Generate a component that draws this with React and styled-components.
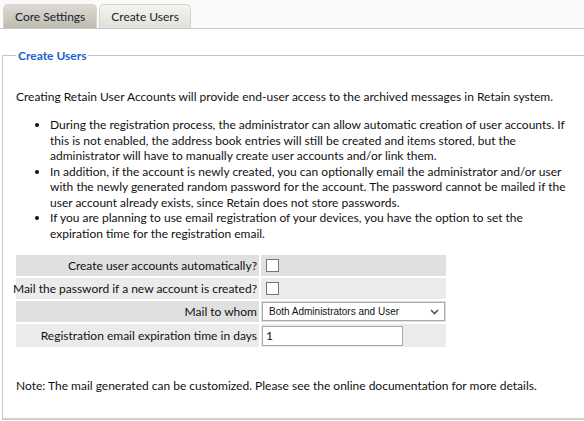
import React, { useState } from 'react';
import styled, { createGlobalStyle } from 'styled-components';

const Global = createGlobalStyle`
body {
	margin: 0;
	background: #fafaf8;
	font-family: Lato, "Liberation Sans", sans-serif;
	font-size: 12px;
	color: #111;
}
`

const TabStrip = styled.div`
display: flex;
align-items: flex-end;
gap: 2px;
height: 29px;
padding-left: 3px;
box-sizing: border-box;
border-bottom: 1px solid #c9c9c6;
`
const Tab = styled.div`
height: 24px;
box-sizing: border-box;
padding: 0 11px;
display: flex;
align-items: center;
font-size: 12px;
color: #1c1c2e;
border: 1px solid #d6d4cc;
border-bottom: none;
border-radius: 5px 5px 0 0;
background: ${p => p.active
		? 'linear-gradient(#f4f3ef, #e2e0da)'
		: 'linear-gradient(#dddbd4, #bdbab0)'};
cursor: pointer;
`
const Content = styled.div`
background: #fff;
padding: 19px 0 1px 2px;
`
const Fieldset = styled.fieldset`
margin: 0;
padding: 26px 0 25px 13px;
border: 1px solid #c4c4c4;
border-right: none;
border-bottom: 2px solid #cfcfcf;
`
const Legend = styled.legend`
color: #1a5fd0;
font-weight: bold;
font-size: 12px;
padding: 0 2px;
margin-left: 0;
`
const Intro = styled.p`
margin: 0 0 12px;
line-height: 16px;
`
const Bullets = styled.ul`
margin: 0;
padding: 0 16px 0 34px;
line-height: 15.5px;
`
const Grid = styled.div`
display: grid;
grid-template-columns: 243px 185px;
gap: 2px;
margin-top: 14px;
`
const Label = styled.div`
background: ${p => p.alt ? '#ebebeb' : '#e0e0e0'};
white-space: nowrap;
padding-right: 2px;
height: ${p => p.tall ? '23px' : '21px'};
display: flex;
align-items: center;
justify-content: flex-end;
`
const Field = styled.div`
background: ${p => p.alt ? '#ebebeb' : '#e0e0e0'};
height: ${p => p.tall ? '23px' : '21px'};
display: flex;
align-items: center;
padding-left: 1px;
`
const Box = styled.div`
width: 13px;
height: 13px;
margin-left: 4px;
border: 1px solid #767676;
background: #fff;
box-sizing: border-box;
display: flex;
align-items: center;
justify-content: center;
cursor: pointer;
`
const Select = styled.div`
width: 183px;
height: 19px;
box-sizing: border-box;
border: 1px solid #a9a9a9;
background: #fff;
display: flex;
align-items: center;
justify-content: space-between;
padding: 0 5px 0 6px;
font-family: "Liberation Sans", Arial, sans-serif;
font-size: 10px;
`
const Input = styled.div`
width: 141px;
height: 20px;
box-sizing: border-box;
border: 1px solid #a9a9a9;
background: #fff;
padding-left: 3px;
display: flex;
align-items: center;
font-size: 12px;
`
const Note = styled.p`
margin: 31px 0 0;
`

function Check({ on, onToggle }) {
	return (
		<Box onClick={onToggle}>
			{on && (
				<svg width="9" height="9" viewBox="0 0 9 9">
					<path d="M1 4.5 L3.5 7 L8 1.5" fill="none" stroke="#333" strokeWidth="1.5" />
				</svg>
			)}
		</Box>
	)
}

export default function App() {
	const [tab, setTab] = useState(1);
	const [auto, setAuto] = useState(false);
	const [mail, setMail] = useState(false);

	return (
		<>
			<Global />
			<TabStrip>
				<Tab active={tab === 0} onClick={() => setTab(0)}>Core Settings</Tab>
				<Tab active={tab === 1} onClick={() => setTab(1)}>Create Users</Tab>
			</TabStrip>
			<Content>
				<Fieldset>
					<Legend>Create Users</Legend>
					<Intro>Creating Retain User Accounts will provide end-user access to the archived messages in Retain system.</Intro>
					<Bullets>
						<li>During the registration process, the administrator can allow automatic creation of user accounts. If this is not enabled, the address book entries will still be created and items stored, but the administrator will have to manually create user accounts and/or link them.</li>
						<li>In addition, if the account is newly created, you can optionally email the administrator and/or user with the newly generated random password for the account. The password cannot be mailed if the user account already exists, since Retain does not store passwords.</li>
						<li>If you are planning to use email registration of your devices, you have the option to set the expiration time for the registration email.</li>
					</Bullets>
					<Grid>
						<Label>Create user accounts automatically?</Label>
						<Field><Check on={auto} onToggle={() => setAuto(!auto)} /></Field>
						<Label alt>Mail the password if a new account is created?</Label>
						<Field alt><Check on={mail} onToggle={() => setMail(!mail)} /></Field>
						<Label>Mail to whom</Label>
						<Field>
							<Select>
								<span>Both Administrators and User</span>
								<svg width="9" height="6" viewBox="0 0 9 6">
									<path d="M1 1 L4.5 4.5 L8 1" fill="none" stroke="#555" strokeWidth="1.6" />
								</svg>
							</Select>
						</Field>
						<Label alt tall>Registration email expiration time in days</Label>
						<Field alt tall><Input>1</Input></Field>
					</Grid>
					<Note>Note: The mail generated can be customized. Please see the online documentation for more details.</Note>
				</Fieldset>
			</Content>
		</>
	)
}
